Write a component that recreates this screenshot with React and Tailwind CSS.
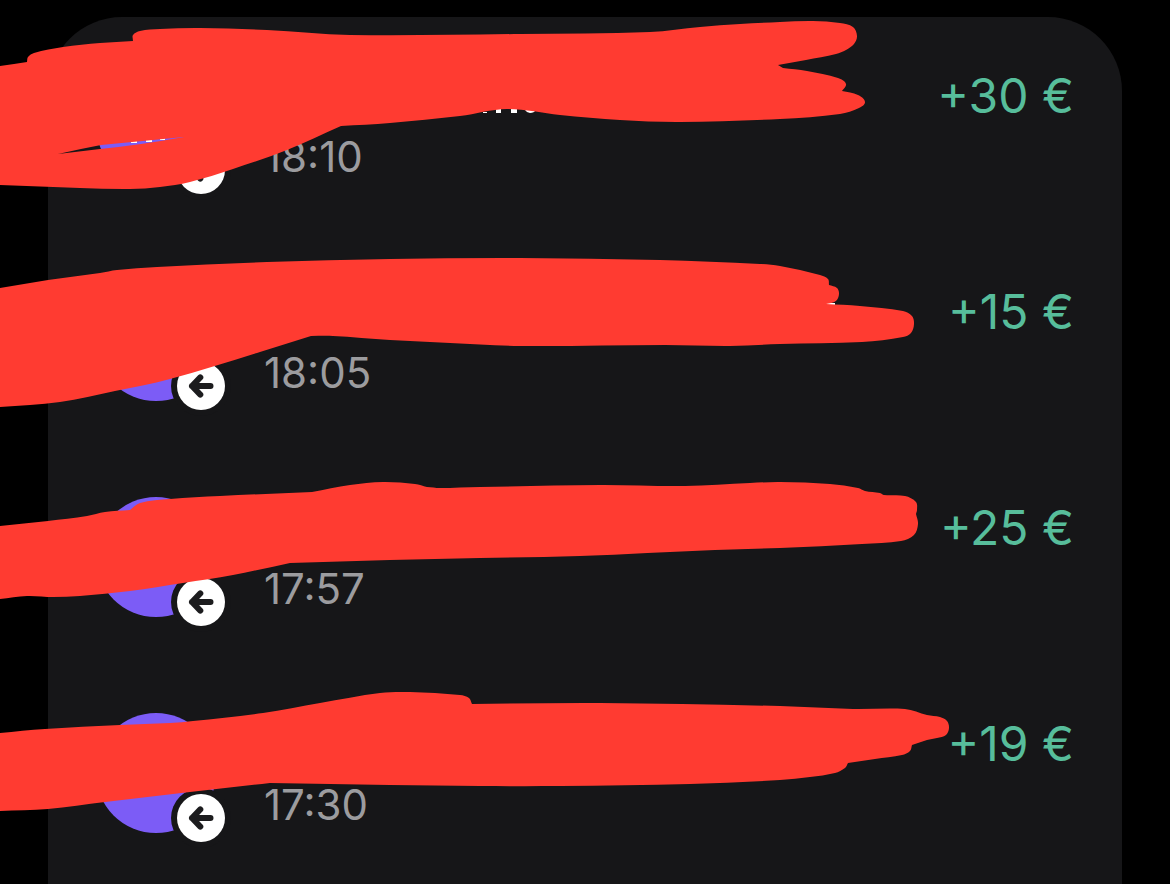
import React from 'react';

const transactions = [
  { time: '18:10', amount: '+30 €' },
  { time: '18:05', amount: '+15 €' },
  { time: '17:57', amount: '+25 €' },
  { time: '17:30', amount: '+19 €' },
];

// Outline of each marker stroke. Every inner list is one smooth run, runs meet in a sharp corner.
const strokes = [
  [
    [[0, 66], [14, 64], [27, 62]],
    [[27, 62], [28, 57], [34, 53], [63, 47], [100, 43], [133, 41]],
    [[133, 41], [133, 35], [140, 31], [160, 29], [200, 28], [267, 30], [350, 35], [520, 34], [650, 32], [700, 27], [740, 24], [780, 22], [813, 21], [840, 23], [853, 27], [857, 36], [854, 44], [846, 50], [836, 54], [806, 60], [778, 65]],
    [[778, 65], [783, 68]],
    [[783, 68], [807, 71], [838, 78], [846, 84], [842, 91]],
    [[842, 91], [858, 95], [865, 102], [859, 108], [840, 114], [780, 119], [680, 122], [620, 120], [560, 115], [507, 109], [460, 116], [390, 123], [341, 126]],
    [[341, 126], [287, 150], [233, 169], [190, 182], [160, 187], [130, 189], [80, 188], [0, 185]],
  ],
  [
    [[0, 288], [48, 280], [100, 273], [117, 270], [157, 267], [267, 262], [390, 259], [520, 258], [660, 260], [760, 264], [780, 266], [820, 275], [828, 279], [829, 285]],
    [[829, 285], [837, 288], [839, 294], [836, 301], [826, 304]],
    [[826, 304], [860, 306], [903, 311], [912, 316], [914, 324], [911, 333], [903, 337], [862, 342], [780, 344], [730, 346], [665, 345], [520, 346], [450, 343], [390, 340], [333, 336], [311, 336]],
    [[311, 336], [260, 352], [170, 379], [115, 391], [60, 402], [0, 407]],
  ],
  [
    [[0, 526], [48, 521], [87, 516], [105, 512], [130, 510]],
    [[130, 510], [140, 503], [170, 499], [220, 496], [312, 492]],
    [[312, 492], [350, 485], [383, 482], [415, 484], [427, 487]],
    [[427, 487], [440, 488], [480, 487], [600, 485], [685, 486], [750, 483], [780, 482], [830, 484], [858, 488], [865, 491], [880, 493], [884, 495], [905, 496], [916, 502], [917, 510], [916, 514]],
    [[916, 514], [918, 524], [914, 535], [901, 541], [862, 544], [780, 548], [715, 550], [580, 556], [480, 558], [390, 560], [290, 563]],
    [[290, 563], [233, 575], [183, 583], [130, 591], [80, 596], [53, 597], [27, 596], [0, 599]],
  ],
  [
    [[0, 733], [45, 729], [120, 725], [170, 723], [193, 721], [263, 713], [320, 703], [380, 693], [410, 692], [460, 695], [469, 698], [472, 704]],
    [[472, 704], [600, 703], [780, 706], [853, 709], [905, 709], [927, 715], [940, 717], [947, 721], [949, 728], [946, 735], [937, 738], [927, 740], [912, 745]],
    [[912, 745], [910, 751], [902, 755], [875, 759], [848, 763]],
    [[848, 763], [845, 768], [835, 773], [810, 777], [780, 780], [690, 784], [560, 786], [480, 786], [390, 785], [270, 783]],
    [[270, 783], [190, 792], [105, 802], [48, 809], [0, 811]],
  ],
];

// Small gap the first stroke leaves open over the avatar
const gap = 'M58 154 Q80 149 101 145 L184 137 Q140 145 100 149 Z';

const smooth = (points) =>
  points
    .slice(1)
    .map((end, i) => {
      const start = points[i];
      const before = points[i - 1] || start;
      const after = points[i + 2] || end;
      // keep the handles short next to tight turns
      const length = Math.hypot(end[0] - start[0], end[1] - start[1]);
      const handle = (a, b) => {
        const d = Math.hypot(b[0] - a[0], b[1] - a[1]) || 1;
        return [((b[0] - a[0]) / d) * (length / 3), ((b[1] - a[1]) / d) * (length / 3)];
      };
      const h1 = handle(before, end);
      const h2 = handle(start, after);
      return `C${start[0] + h1[0]} ${start[1] + h1[1]} ${end[0] - h2[0]} ${end[1] - h2[1]} ${end[0]} ${end[1]}`;
    })
    .join(' ');

const outline = (runs) => `M${runs[0][0].join(' ')} ${runs.map(smooth).join(' ')} Z`;

const Avatar = () => (
  <div className="relative size-[120px] shrink-0 rounded-full bg-[#7c5cf6]">
    {/* Incoming payment badge */}
    <span className="absolute -right-[15px] -bottom-[15px] flex size-[60px] items-center justify-center rounded-full bg-[#161618]">
      <svg viewBox="0 0 48 48" className="size-12" aria-hidden="true">
        <circle cx="24" cy="24" r="24" fill="#fff" />
        <path
          d="M33.500 24H15M23.300 15.400 15 24l8.300 8.600"
          fill="none"
          stroke="#1c1c1e"
          strokeWidth="6"
          strokeLinecap="round"
          strokeLinejoin="round"
        />
      </svg>
    </span>
  </div>
);

const Transaction = ({ time, amount }) => (
  <li className="flex gap-12">
    <Avatar />
    <div className="flex flex-1 flex-col justify-end">
      <time className="text-[42px] leading-[56px] text-[#9c9c9f]">{time}</time>
    </div>
    <span className="text-[48px] leading-[62px] text-[#57bd9b]">{amount}</span>
  </li>
);

const Marker = () => (
  <svg
    width="1170"
    height="884"
    viewBox="0 0 1170 884"
    className="pointer-events-none absolute top-0 left-0 max-w-none"
    aria-hidden="true"
  >
    {/* Bits of lettering that stick out from under the strokes */}
    <g fill="#fff">
      <path d="M483 112h4v1h-4zM496 109h5v4h-5zM511 109h6v4h-6zM525 110h11q-2 3-6 3-3 0-5-3z" />
      <path d="M115 140h7v3h-7zM131 140h6v3h-6zM146 139h6v3h-6zM160 138h5v2h-5z" />
      <path d="M824 303h11v2h-11z" />
    </g>
    {strokes.map((runs, i) => (
      <path key={i} d={i === 0 ? `${outline(runs)} ${gap}` : outline(runs)} fill="#ff3b31" fillRule="evenodd" />
    ))}
  </svg>
);

const App = () => {
  return (
    <main className="relative flex min-h-screen flex-col overflow-hidden bg-black px-12 pt-[17px] font-[Inter,sans-serif]">
      <ul className="flex flex-1 flex-col gap-24 rounded-t-[74px] bg-[#161618] px-12 pt-12">
        {transactions.map((item) => (
          <Transaction key={item.time} {...item} />
        ))}
      </ul>
      <Marker />
    </main>
  );
};

export default App;
